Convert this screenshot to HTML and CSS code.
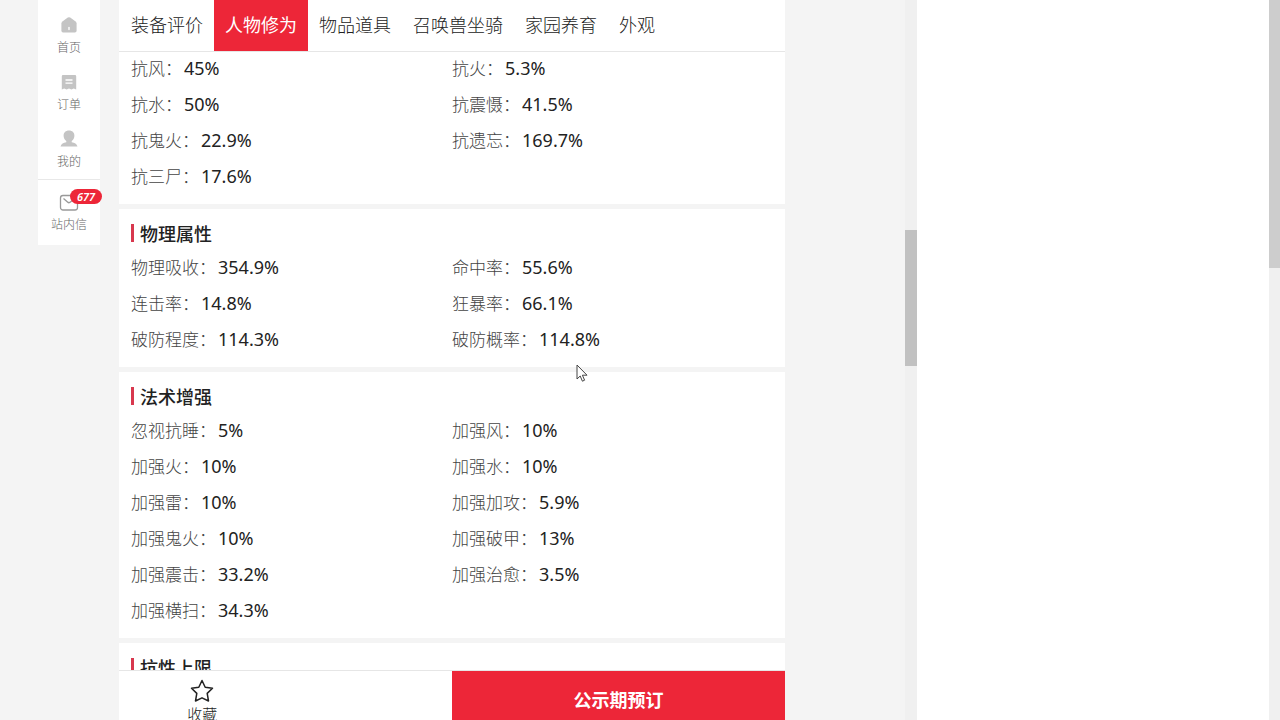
FILE: index.html
```html
<!DOCTYPE html>
<html lang="zh-CN">
  <head>
    <meta charset="UTF-8" />
    <meta name="viewport" content="width=device-width, initial-scale=1.0" />
    <title>人物修为</title>
    <link rel="stylesheet" href="styles.css">
  </head>
  <body>
    <div class="app">
      <div class="page">
        <aside class="sidebar">
          <a href="#">
            <svg width="20" height="20" viewBox="0 0 20 20"><path fill="#c4c4c4" d="M8.8 2.6q1.2-.8 2.4 0l5.4 4q1 .8 1 2V15.800q0 1.700-1.700 1.700H4.100q-1.700 0-1.700-1.700V8.600q0-1.200 1-2z"/><path stroke="#fff" stroke-width="1.400" stroke-linecap="round" d="M10 12.500v2"/></svg>
            <span>首页</span>
          </a>
          <a href="#">
            <svg width="20" height="20" viewBox="0 0 20 20"><path fill="#c4c4c4" d="M4 3h12q1.200 0 1.200 1.200V17.500l-2.400-1-2.400 1-2.400-1-2.400 1-2.400-1-2.400 1V4.200Q2.800 3 4 3z"/><path stroke="#fff" stroke-width="1.300" d="M6.500 8h7M6.500 11.200h7"/></svg>
            <span>订单</span>
          </a>
          <a href="#">
            <svg width="20" height="20" viewBox="0 0 20 20"><path fill="#c4c4c4" d="M10 1.500c3.400 0 5.400 2.200 5.400 5.200 0 2.200-1 4-2.700 5.200v1.300c3 .6 5 1.600 5.800 4.300h-17c.8-2.700 2.800-3.700 5.800-4.300v-1.300C5.600 10.700 4.600 8.900 4.600 6.700c0-3 2-5.200 5.400-5.200z"/></svg>
            <span>我的</span>
          </a>
          <a href="#" class="mail">
            <svg width="20" height="20" viewBox="0 0 20 20"><rect x="1.500" y="3.500" width="17" height="14.500" rx="2.500" fill="none" stroke="#999" stroke-width="1.300"/><path d="M4.500 6.500l4 3.600q1.500 1.300 3 0l4-3.600" fill="none" stroke="#999" stroke-width="1.300"/></svg>
            <span>站内信</span>
            <em class="badge">677</em>
          </a>
        </aside>

        <main class="main">
          <nav class="tabs">
            <button type="button">装备评价</button>
            <button type="button" class="active">人物修为</button>
            <button type="button">物品道具</button>
            <button type="button">召唤兽坐骑</button>
            <button type="button">家园养育</button>
            <button type="button">外观</button>
          </nav>

          <div class="cards">
            <section class="card card-first">
              <dl class="attrs">
                <div><dt>抗风：</dt><dd>45%</dd></div>
                <div><dt>抗火：</dt><dd>5.3%</dd></div>
                <div><dt>抗水：</dt><dd>50%</dd></div>
                <div><dt>抗震慑：</dt><dd>41.5%</dd></div>
                <div><dt>抗鬼火：</dt><dd>22.9%</dd></div>
                <div><dt>抗遗忘：</dt><dd>169.7%</dd></div>
                <div><dt>抗三尸：</dt><dd>17.6%</dd></div>
              </dl>
            </section>

            <section class="card">
              <h2>物理属性</h2>
              <dl class="attrs">
                <div><dt>物理吸收：</dt><dd>354.9%</dd></div>
                <div><dt>命中率：</dt><dd>55.6%</dd></div>
                <div><dt>连击率：</dt><dd>14.8%</dd></div>
                <div><dt>狂暴率：</dt><dd>66.1%</dd></div>
                <div><dt>破防程度：</dt><dd>114.3%</dd></div>
                <div><dt>破防概率：</dt><dd>114.8%</dd></div>
              </dl>
            </section>

            <section class="card">
              <h2>法术增强</h2>
              <dl class="attrs">
                <div><dt>忽视抗睡：</dt><dd>5%</dd></div>
                <div><dt>加强风：</dt><dd>10%</dd></div>
                <div><dt>加强火：</dt><dd>10%</dd></div>
                <div><dt>加强水：</dt><dd>10%</dd></div>
                <div><dt>加强雷：</dt><dd>10%</dd></div>
                <div><dt>加强加攻：</dt><dd>5.9%</dd></div>
                <div><dt>加强鬼火：</dt><dd>10%</dd></div>
                <div><dt>加强破甲：</dt><dd>13%</dd></div>
                <div><dt>加强震击：</dt><dd>33.2%</dd></div>
                <div><dt>加强治愈：</dt><dd>3.5%</dd></div>
                <div><dt>加强横扫：</dt><dd>34.3%</dd></div>
              </dl>
            </section>

            <section class="card">
              <h2>抗性上限</h2>
            </section>
          </div>

          <footer class="actions">
            <div class="tools">
              <button type="button" class="fav">
                <svg width="24" height="24" viewBox="0 0 24 24"><path fill="none" stroke="#222" stroke-width="1.500" stroke-linejoin="round" d="M12 1.500l3.200 6.700 7.300 1-5.300 5.200 1.300 7.600L12 18.800 5.500 22l1.300-7.600L1.500 9.200l7.300-1z"/></svg>
                <span>收藏</span>
              </button>
            </div>
            <button type="button" class="buy">公示期预订</button>
          </footer>
        </main>
      </div>

      <div class="scrollbar inner"><div class="thumb"></div></div>
      <div class="blank"></div>
      <div class="scrollbar outer"><div class="thumb"></div></div>
    </div>

    <svg class="cursor" width="12" height="19" viewBox="0 0 12 19"><path fill="#fff" stroke="#444" stroke-width="1" stroke-linejoin="round" d="M1 1v14l3.200-3 2.200 5.200 2.200-1-2.200-5H11z"/></svg>
  </body>
</html>
```
FILE: styles.css
```css
* {
  box-sizing: border-box;
}

body {
  margin: 0;
  height: 100vh;
  overflow: hidden;
  background-color: #fff;
  color: #222;
  font-family: "Noto Sans", "Noto Sans CJK SC", sans-serif;
  font-size: 18px;
}

button {
  padding: 0;
  border: none;
  background: none;
  color: inherit;
  font: inherit;
  cursor: pointer;
}

.app {
  display: grid;
  grid-template-columns: 18fr 12px 7fr 11px;
  grid-template-rows: 100vh;
}

.page {
  display: flex;
  align-items: flex-start;
  gap: 19px;
  min-width: 0;
  padding: 0 120px 0 38px;
  background-color: #f4f4f4;
}

/* left menu */
.sidebar {
  flex: none;
  width: 62px;
  padding-top: 6px;
  background-color: #fff;
}

.sidebar a {
  position: relative;
  display: flex;
  flex-direction: column;
  align-items: center;
  gap: 3px;
  padding: 9px 0 7px;
  color: #666;
  font-family: "Noto Sans CJK SC", sans-serif;
  font-size: 12px;
  font-weight: 300;
  line-height: 18px;
  text-decoration: none;
}

.sidebar .mail {
  margin-top: 2px;
  padding: 12px 0;
  border-top: 1px solid #e8e8e8;
}

.badge {
  position: absolute;
  top: 9px;
  left: 32px;
  width: 32px;
  border-radius: 8px;
  background-color: #ed2638;
  color: #fff;
  font-family: "Noto Sans", sans-serif;
  font-size: 11px;
  font-weight: 600;
  line-height: 15px;
  text-align: center;
}

/* main column */
.main {
  flex: 1;
  display: flex;
  flex-direction: column;
  min-width: 0;
  height: calc(100vh + 9px);
}

.tabs {
  position: relative;
  flex: none;
  display: flex;
  height: 51px;
  padding-left: 1px;
  background-color: #fff;
  box-shadow: 0 1px #e6e6e6;
}

.tabs button {
  padding: 0 11px 4px;
  font-family: "Noto Sans CJK SC", sans-serif;
  font-weight: 300;
}

.tabs .active {
  background-color: #ed2638;
  color: #fff;
  font-weight: 400;
}

.cards {
  flex: 1;
  display: flex;
  flex-direction: column;
  gap: 5px;
  min-height: 0;
  overflow: hidden;
}

.card {
  flex: none;
  padding: 12px 12px 10px;
  background-color: #fff;
}

/* scrolled partly under the tabs */
.card-first {
  margin-top: -1px;
  padding-top: 0;
}

.card h2 {
  display: flex;
  align-items: center;
  gap: 6px;
  margin: 0 0 4px;
  font-family: "Noto Sans CJK SC", sans-serif;
  font-size: 18px;
  font-weight: 500;
  line-height: 24px;
}

.card h2::before {
  content: "";
  width: 3px;
  height: 18px;
  background-color: #d8384e;
}

.attrs {
  display: grid;
  grid-template-columns: 1fr 1fr;
  margin: 0;
  line-height: 36px;
}

.attrs div {
  display: flex;
  gap: 2px;
}

.attrs dt {
  color: #444;
  font-family: "Noto Sans CJK SC", sans-serif;
  font-size: 17px;
  font-weight: 300;
}

.attrs dd {
  margin: 0;
}

/* bottom bar */
.actions {
  position: relative;
  flex: none;
  display: flex;
  height: 58px;
  background-color: #fff;
  box-shadow: 0 -1px #e6e6e6;
}

.tools,
.buy {
  flex: 1;
}

.fav {
  display: flex;
  flex-direction: column;
  align-items: center;
  gap: 2px;
  width: 50%;
  padding-top: 8px;
  font-family: "Noto Sans CJK SC", sans-serif;
  font-size: 15px;
  font-weight: 300;
  line-height: 18px;
}

.buy {
  padding-bottom: 2px;
  background-color: #ed2638;
  color: #fff;
  font-family: "Noto Sans CJK SC", sans-serif;
  font-weight: 700;
}

/* scrollbars */
.scrollbar {
  background-color: #f0f0f0;
}

.inner {
  padding-top: 230px;
}

.inner .thumb {
  height: 136px;
  background-color: #c1c1c1;
}

.outer .thumb {
  height: 268px;
  background-color: #cdcdcd;
}

.cursor {
  position: absolute;
  top: 364px;
  left: 576px;
}
```
